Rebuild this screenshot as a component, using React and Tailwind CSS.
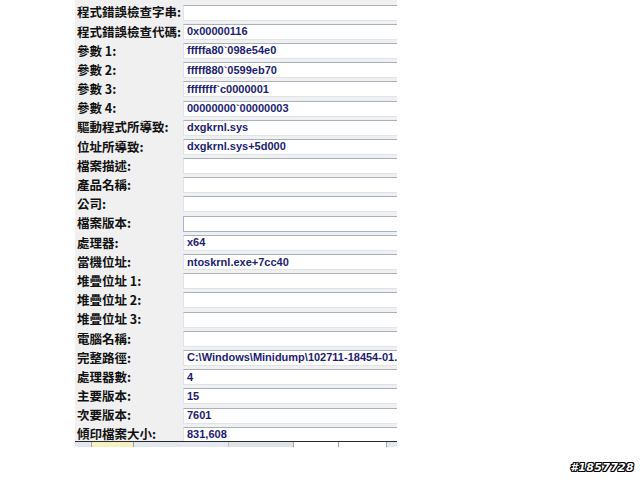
import React from 'react';

const rows = [
  { label: '程式錯誤檢查字串:', value: '' },
  { label: '程式錯誤檢查代碼:', value: '0x00000116' },
  { label: '參數 1:', value: 'fffffa80`098e54e0' },
  { label: '參數 2:', value: 'fffff880`0599eb70' },
  { label: '參數 3:', value: 'ffffffff`c0000001' },
  { label: '參數 4:', value: '00000000`00000003' },
  { label: '驅動程式所導致:', value: 'dxgkrnl.sys' },
  { label: '位址所導致:', value: 'dxgkrnl.sys+5d000' },
  { label: '檔案描述:', value: '' },
  { label: '產品名稱:', value: '' },
  { label: '公司:', value: '' },
  { label: '檔案版本:', value: '', focus: true },
  { label: '處理器:', value: 'x64' },
  { label: '當機位址:', value: 'ntoskrnl.exe+7cc40' },
  { label: '堆疊位址 1:', value: '' },
  { label: '堆疊位址 2:', value: '' },
  { label: '堆疊位址 3:', value: '' },
  { label: '電腦名稱:', value: '' },
  { label: '完整路徑:', value: 'C:\\Windows\\Minidump\\102711-18454-01.dmp' },
  { label: '處理器數:', value: '4' },
  { label: '主要版本:', value: '15' },
  { label: '次要版本:', value: '7601' },
  { label: '傾印檔案大小:', value: '831,608' },
];

const Row = ({ label, value, focus }) => (
  <div className="flex items-center h-[19.2px] shrink-0">
    <div className="w-[108px] shrink-0 pl-[2px] text-[12.5px] font-bold leading-none text-[#111] whitespace-nowrap [font-family:'Noto_Sans_CJK_TC','Liberation_Sans',sans-serif]">
      {label}
    </div>
    <div
      className={
        'w-[240px] shrink-0 h-[16px] bg-white border border-t-[#a9b1ba] flex items-center pl-[3px] overflow-hidden ' +
        (focus ? 'border-[#9fb7d0]' : 'border-[#dfe4ea]')
      }
    >
      <span className="text-[11px] font-bold leading-none text-[#1c1c72] whitespace-nowrap [font-family:'Liberation_Sans',Arial,sans-serif]">
        {value}
      </span>
    </div>
  </div>
);

export default function App() {
  return (
    <div className="relative w-[640px] h-[480px] bg-white overflow-hidden">
      <div className="ml-[75px] w-[322px]">
        <div className="h-[441px] bg-[#f0f0f0] overflow-hidden flex flex-col pt-[3px]">
          {rows.map((r) => (
            <Row key={r.label} {...r} />
          ))}
        </div>
        <div className="h-[1px] bg-[#2a2a2a]" />
        <div className="flex h-[5px] bg-[#e4e8ee]">
          <div className="w-[17px] border-r border-[#9aa4b0]" />
          <div className="w-[42px] bg-[#f6efc0] border-r border-[#9aa4b0]" />
          <div className="w-[95px] border-r border-[#c0c6ce]" />
          <div className="w-[65px] bg-[#dfe3e8] border-r border-[#9aa4b0]" />
          <div className="w-[45px] bg-white border-r border-[#9aa4b0]" />
          <div className="w-[48px] bg-white border-r border-[#9aa4b0]" />
          <div className="flex-1" />
        </div>
      </div>
      <div className="absolute right-[6px] bottom-[4px] text-[11px] font-bold italic text-white tracking-[0.3px] [font-family:'DejaVu_Sans',sans-serif] [text-shadow:1px_0_0_#000,-1px_0_0_#000,0_1px_0_#000,0_-1px_0_#000,1px_1px_0_#000,-1px_-1px_0_#000,1px_-1px_0_#000,-1px_1px_0_#000]">
        #1857728
      </div>
    </div>
  );
}
